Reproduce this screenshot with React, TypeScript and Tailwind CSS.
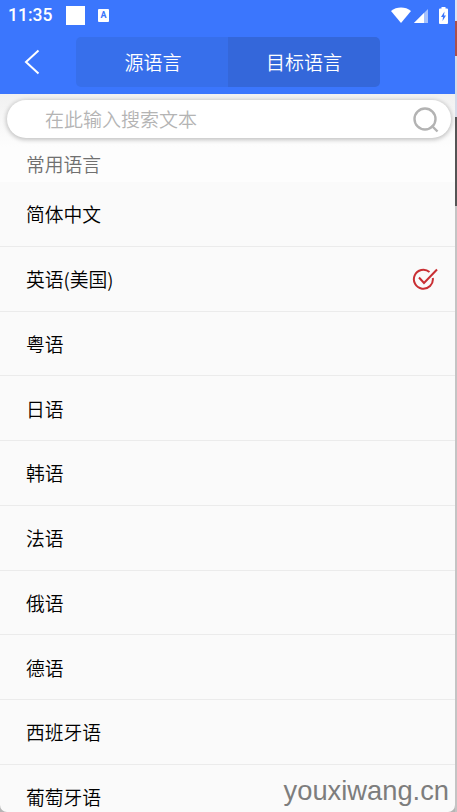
interface Language {
  name: string
  selected?: boolean
}

const languages: Language[] = [
  { name: '简体中文' },
  { name: '英语(美国)', selected: true },
  { name: '粤语' },
  { name: '日语' },
  { name: '韩语' },
  { name: '法语' },
  { name: '俄语' },
  { name: '德语' },
  { name: '西班牙语' },
  { name: '葡萄牙语' },
]

function StatusBar() {
  return (
    <div className="flex h-[30px] items-center pr-[7px] pl-2 text-white">
      <span className="w-[58px] pt-px font-['Roboto',sans-serif] text-[17.5px] leading-none font-medium">
        11:35
      </span>
      <span className="h-[19px] w-[19px] bg-white" />
      <span className="ml-[13px] flex h-[13px] w-[11px] items-center justify-center rounded-[1px] bg-white font-['Roboto',sans-serif] text-[9px] leading-none font-bold text-[#3b76fb]">
        A
      </span>
      <div className="ml-auto flex items-center">
        <svg className="h-[16px] w-[20px]" viewBox="0 0 20 16" fill="currentColor">
          <path d="M10 16L0 4C5.5-.6 14.500-.6 20 4z" />
        </svg>
        <svg className="ml-[3px] h-[15px] w-[14px]" viewBox="0 0 14 15">
          <path d="M0 15L14 1v14z" fill="#a5c1fd" />
          <path d="M0 15L10 5v10z" fill="#fff" />
        </svg>
        <svg className="ml-[11px] h-[17px] w-[9px]" viewBox="0 0 9 17">
          <path d="M2.500 1.500V0h4v1.500H8a1 1 0 011 1V16a1 1 0 01-1 1H1a1 1 0 01-1-1V2.500a1 1 0 011-1z" fill="#fff" />
          <path d="M5.500 4.500L2 10h2l-.5 4L7 8.500H5z" fill="#3b76fb" />
        </svg>
      </div>
    </div>
  )
}

function Header() {
  return (
    <header className="h-[94px] shrink-0 bg-[#3b76fd]">
      <StatusBar />
      <div className="flex h-[64px] items-center pl-6">
        <svg className="h-[26px] w-4" viewBox="0 0 16 26" fill="none" stroke="#fff" strokeWidth={2}>
          <path d="M14.500 1.500L2 13l12.500 11.500" />
        </svg>
        <div className="ml-9 grid h-[50px] w-[304px] grid-cols-2 overflow-hidden rounded-[5px] text-[19px] font-[350] text-white">
          <button className="bg-[#376feb] pl-0.5">源语言</button>
          <button className="bg-[#3467da]">目标语言</button>
        </div>
      </div>
    </header>
  )
}

function SearchBar() {
  return (
    <div className="h-[53px] shrink-0 bg-gradient-to-b from-[#f1f1f1] to-[#fdfdfd] pt-[6px] pr-[4px] pl-[7px]">
      <div className="flex h-[38px] items-center rounded-full bg-white pr-[12px] pl-[38px] shadow-[0_1px_4px_1px_rgba(0,0,0,0.22)]">
        <span className="flex-1 text-[19px] font-[350] text-[#b4b4b4]">在此输入搜索文本</span>
        <svg
          className="mt-[2px] h-[26px] w-[27px]"
          viewBox="0 0 27 26"
          fill="none"
          stroke="#b3b3b3"
          strokeWidth={2.4}
        >
          <circle cx="13" cy="12" r="10.500" />
          <path d="M19.500 18.500l6 6" />
        </svg>
      </div>
    </div>
  )
}

function LanguageRow({ name, selected }: Language) {
  return (
    <li className="flex h-[64.750px] shrink-0 items-center justify-between border-b border-[#ebebeb] pt-px pr-[17px] pl-[26px]">
      <span>{name}</span>
      {selected && (
        <svg
          className="h-6 w-[26px]"
          viewBox="0 0 26 24"
          fill="none"
          stroke="#c92f33"
          strokeWidth={2}
        >
          <path d="M17.500 5A9.500 9.500 0 1020.800 11" />
          <path d="M7 10.500l5 5.500L25 2.500" />
        </svg>
      )}
    </li>
  )
}

export default function App() {
  return (
    <div className="relative flex h-[812px] w-[457px] overflow-hidden bg-[#b5b5b5] font-['Noto_Sans_CJK_SC',sans-serif]">
      <main className="flex w-[455px] flex-col overflow-hidden rounded-b-[7px] bg-[#fafafa]">
        <Header />
        <SearchBar />
        <h2 className="flex h-[35px] shrink-0 items-center bg-[#fdfdfd] pl-[26px] text-[18.8px] font-[350] text-[#707070]">
          常用语言
        </h2>
        <ul className="flex flex-col text-[18.8px] font-[350] text-black">
          {languages.map((language) => (
            <LanguageRow key={language.name} {...language} />
          ))}
        </ul>
      </main>

      {/* Strip of the desktop along the window edge */}
      <div className="flex w-[2px] flex-col">
        <div className="h-[21px] bg-[#dbe4f4]" />
        <div className="h-[35px] bg-[#a9504d]" />
        <div className="h-[61px] bg-[#d5dbe8]" />
        <div className="h-[89px] bg-[#555]" />
        <div className="flex-1 bg-[#c4c4c4]" />
      </div>

      <span className="absolute right-[8px] bottom-[6px] font-['Liberation_Sans',sans-serif] text-[27.3px] leading-[30px] text-[#7d7d7d]">
        youxiwang.cn
      </span>
    </div>
  )
}
